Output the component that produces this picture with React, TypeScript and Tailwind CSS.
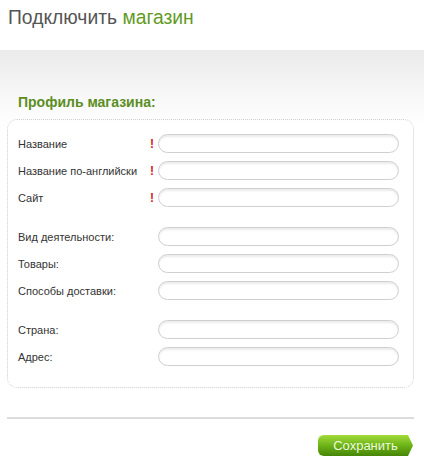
const groups: { label: string; required?: boolean }[][] = [
  [
    { label: "Название", required: true },
    { label: "Название по-английски", required: true },
    { label: "Сайт", required: true },
  ],
  [{ label: "Вид деятельности:" }, { label: "Товары:" }, { label: "Способы доставки:" }],
  [{ label: "Страна:" }, { label: "Адрес:" }],
];

const Field = ({ label, required }: { label: string; required?: boolean }) => (
  <div className="grid grid-cols-[132px_8px_241px] items-center">
    <span className="text-[11px] text-[#333] leading-none pt-[2px]">{label}</span>
    <span className="text-[12px] font-bold text-[#d01c1c] leading-none">{required ? "!" : ""}</span>
    <input
      type="text"
      className="h-[19px] rounded-full border border-[#cfcfcf] bg-white shadow-[inset_0_2px_2px_rgba(0,0,0,0.08)] px-2 text-[12px] outline-none"
    />
  </div>
);

export default function App() {
  return (
    <div className="w-[424px] h-[469px] bg-white overflow-hidden font-['Liberation_Sans',Arial,sans-serif]">
      <h1 className="pl-2 pt-[7px] h-[50px] text-[19.3px] font-normal text-[#555] leading-[22px]">
        Подключить <span className="text-[#5f9b1f]">магазин</span>
      </h1>

      <div className="bg-gradient-to-b from-[#ebebeb] to-white to-[75px] pt-[44px]">
        <h2 className="pl-[18px] text-[14px] font-bold text-[#5b8e1e] leading-[17px]">Профиль магазина:</h2>

        <div className="mt-[8px] ml-[7px] w-[407px] rounded-[10px] border border-dotted border-[#cdcdcd] pl-[10px] pt-[14px] pb-[21px] flex flex-col gap-[20px]">
          {groups.map((g, i) => (
            <div key={i} className="flex flex-col gap-[8px]">
              {g.map((f) => (
                <Field key={f.label} label={f.label} required={f.required} />
              ))}
            </div>
          ))}
        </div>
      </div>

      <div className="mt-[29px] ml-[7px] w-[407px] h-[2px] bg-[#dcdcdc]" />

      <div className="flex justify-end pr-[11px] mt-[16px]">
        <button className="w-[95px] h-[21px] rounded-l-[6px] bg-gradient-to-b from-[#a3dc3a] via-[#6cb317] to-[#468507] text-[13px] text-[#eef9dd] leading-none shadow-[0_0_3px_rgba(140,210,40,0.5)] [clip-path:polygon(0_0,calc(100%-5px)_0,100%_50%,calc(100%-5px)_100%,0_100%)]">
          Сохранить
        </button>
      </div>
    </div>
  );
}
